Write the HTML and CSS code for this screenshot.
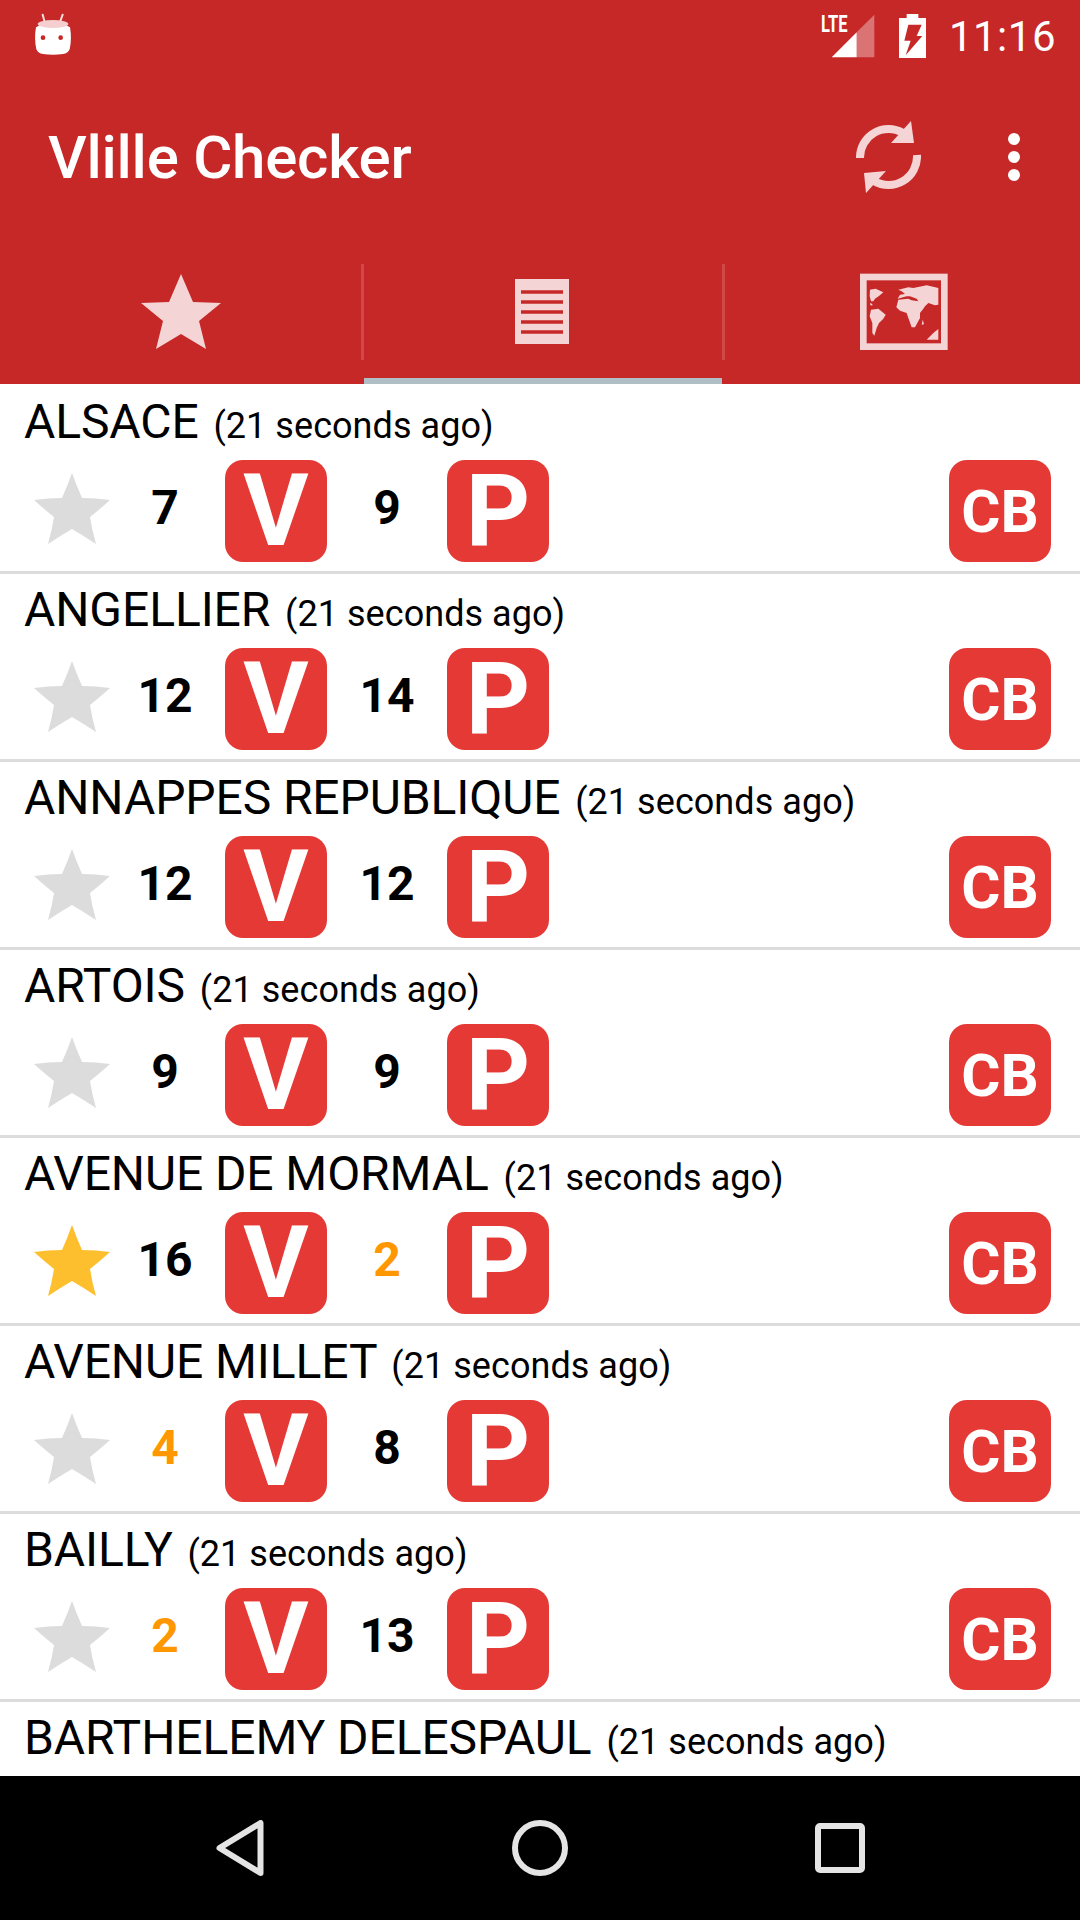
FILE: index.html
```html
<!DOCTYPE html>
<html lang="en">
<head>
    <meta charset="UTF-8">
    <meta name="viewport" content="width=device-width, initial-scale=1.0">
    <title>Vlille Checker</title>
    <link rel="stylesheet" href="styles.css">
</head>
<body>
    <svg class="defs" width="0" height="0">
        <symbol id="star" viewBox="0 0 76 71">
            <path d="M38 0 Q43 14 48 25 Q62 25 76 27 Q66 36 56 44 Q58 57 62 71 Q50 63 38 56 Q26 63 14 71 Q18 57 20 44 Q10 36 0 27 Q14 25 28 25 Q33 14 38 0 Z"/>
        </symbol>
    </svg>

    <header class="header">
        <div class="status-bar">
            <svg class="robot" viewBox="0 0 150 150" width="50" height="50">
                <path d="M44 14 L50 36 M104 14 L96 36" stroke="#f7dede" stroke-width="6" stroke-linecap="round"/>
                <path d="M24 52 Q75 20 126 52 Q132 85 125 118 Q120 130 105 132 Q75 136 45 132 Q30 130 25 118 Q18 85 24 52 Z" fill="#fff"/>
                <ellipse cx="75" cy="42" rx="46" ry="12" fill="#f5cfcf"/>
                <circle cx="45" cy="83" r="7" fill="#c62828"/>
                <circle cx="98" cy="83" r="7" fill="#c62828"/>
            </svg>
            <div class="status-right">
                <svg viewBox="0 0 360 168" width="120" height="56">
                    <text x="18" y="72" class="lte" textLength="80" lengthAdjust="spacingAndGlyphs">LTE</text>
                    <polygon points="50,148 125,73 125,148" fill="#fff"/>
                    <polygon points="125,73 178,20 178,148 125,148" fill="#fff" opacity=".35"/>
                    <path d="M252 30 H275 V18 H310 V30 H333 V150 H252 Z" fill="#fff"/>
                    <polygon points="280,50 320,50 305,84 322,84 272,142 287,98 268,98" fill="#c62828"/>
                </svg>
                <span class="clock">11:16</span>
            </div>
        </div>

        <div class="app-bar">
            <h1 class="title">Vlille Checker</h1>
            <svg class="sync" viewBox="0 0 65 72" width="65" height="72">
                <path d="M4 37 A28.5 28.5 0 0 1 47 12 M61 34 A28.5 28.5 0 0 1 18 60" fill="none" stroke="#f4d4d4" stroke-width="8"/>
                <polygon points="55,0 58,22 35,22" fill="#f4d4d4"/>
                <polygon points="10,72 8,52 30,50" fill="#f4d4d4"/>
            </svg>
            <div class="more"><i></i><i></i><i></i></div>
        </div>

        <nav class="tabs">
            <div class="tab tab-first">
                <svg viewBox="0 0 80 76" width="80" height="76">
                    <polygon points="40,0 52,28 80,29 58,47 65,75 40,60 15,75 22,47 0,29 28,28" fill="#f4d4d4"/>
                </svg>
            </div>
            <span class="tab-sep"></span>
            <div class="tab tab-active">
                <svg viewBox="0 0 54 65" width="54" height="65">
                    <rect width="54" height="65" fill="#f4d4d4"/>
                    <path d="M6 13 H48 M6 23 H48 M6 33 H48 M6 43 H48 M6 53 H48" stroke="#c62828" stroke-width="3.5"/>
                </svg>
            </div>
            <span class="tab-sep"></span>
            <div class="tab tab-last">
                <svg viewBox="0 0 294 264" width="98" height="88">
                    <rect x="25" y="27" width="243" height="209" fill="none" stroke="#f4d4d4" stroke-width="20"/>
                    <g fill="#f4d4d4">
                        <path d="M45 65 L62 62 L85 73 L72 84 L60 92 L55 100 L48 100 L44 85 Z"/>
                        <path d="M45 105 L52 108 L52 113 L46 111 Z"/>
                        <path d="M48 125 L70 122 L92 140 L85 152 L72 165 L65 180 L58 203 L52 195 L52 165 L44 145 Z"/>
                        <path d="M130 65 L160 58 L175 60 L215 52 L250 60 L250 110 L240 112 L220 105 L210 115 L205 122 L195 135 L195 150 L180 178 L170 178 L160 150 L155 135 L135 128 L124 118 L130 95 L160 92 L170 97 L190 100 L185 92 L165 85 L155 85 L128 92 L135 80 L150 78 L140 70 Z"/>
                        <path d="M203 155 L207 168 L200 171 Z"/>
                        <path d="M215 215 L235 195 L250 183 L250 215 Z"/>
                    </g>
                </svg>
            </div>
        </nav>
    </header>

    <main class="list">
        <article class="station">
            <div class="station-name">ALSACE <small>(21 seconds ago)</small></div>
            <div class="station-info">
                <svg class="star"><use href="#star"/></svg>
                <span class="count">7</span><span class="badge">V</span>
                <span class="count">9</span><span class="badge">P</span>
                <span class="badge badge-cb">CB</span>
            </div>
        </article>
        <article class="station">
            <div class="station-name">ANGELLIER <small>(21 seconds ago)</small></div>
            <div class="station-info">
                <svg class="star"><use href="#star"/></svg>
                <span class="count">12</span><span class="badge">V</span>
                <span class="count">14</span><span class="badge">P</span>
                <span class="badge badge-cb">CB</span>
            </div>
        </article>
        <article class="station">
            <div class="station-name">ANNAPPES REPUBLIQUE <small>(21 seconds ago)</small></div>
            <div class="station-info">
                <svg class="star"><use href="#star"/></svg>
                <span class="count">12</span><span class="badge">V</span>
                <span class="count">12</span><span class="badge">P</span>
                <span class="badge badge-cb">CB</span>
            </div>
        </article>
        <article class="station">
            <div class="station-name">ARTOIS <small>(21 seconds ago)</small></div>
            <div class="station-info">
                <svg class="star"><use href="#star"/></svg>
                <span class="count">9</span><span class="badge">V</span>
                <span class="count">9</span><span class="badge">P</span>
                <span class="badge badge-cb">CB</span>
            </div>
        </article>
        <article class="station">
            <div class="station-name">AVENUE DE MORMAL <small>(21 seconds ago)</small></div>
            <div class="station-info">
                <svg class="star star-on"><use href="#star"/></svg>
                <span class="count">16</span><span class="badge">V</span>
                <span class="count low">2</span><span class="badge">P</span>
                <span class="badge badge-cb">CB</span>
            </div>
        </article>
        <article class="station">
            <div class="station-name">AVENUE MILLET <small>(21 seconds ago)</small></div>
            <div class="station-info">
                <svg class="star"><use href="#star"/></svg>
                <span class="count low">4</span><span class="badge">V</span>
                <span class="count">8</span><span class="badge">P</span>
                <span class="badge badge-cb">CB</span>
            </div>
        </article>
        <article class="station">
            <div class="station-name">BAILLY <small>(21 seconds ago)</small></div>
            <div class="station-info">
                <svg class="star"><use href="#star"/></svg>
                <span class="count low">2</span><span class="badge">V</span>
                <span class="count">13</span><span class="badge">P</span>
                <span class="badge badge-cb">CB</span>
            </div>
        </article>
        <article class="station">
            <div class="station-name">BARTHELEMY DELESPAUL <small>(21 seconds ago)</small></div>
        </article>
    </main>

    <footer class="nav-bar">
        <svg viewBox="0 0 47 56" width="48" height="56">
            <path d="M44 3 V53 L3 28 Z" fill="none" stroke="#e4e4e4" stroke-width="6" stroke-linejoin="round"/>
        </svg>
        <svg viewBox="0 0 56 56" width="56" height="56">
            <circle cx="28" cy="28" r="25" fill="none" stroke="#e4e4e4" stroke-width="6"/>
        </svg>
        <svg viewBox="0 0 50 50" width="50" height="50">
            <rect x="3" y="3" width="44" height="44" rx="2" fill="none" stroke="#e4e4e4" stroke-width="6"/>
        </svg>
    </footer>
</body>
</html>
```

FILE: styles.css
```css
* {
    box-sizing: border-box;
}
body {
    margin: 0;
    height: 1920px;
    display: flex;
    flex-direction: column;
    font-family: Roboto, "Liberation Sans", sans-serif;
    background: #ffffff;
    color: #000000;
}
.defs {
    display: block;
    height: 0;
}
.header {
    background: #c62828;
    color: white;
}
.status-bar {
    height: 75px;
    display: flex;
    justify-content: space-between;
    align-items: flex-start;
    padding: 8px 24px 0 28px;
}
.robot {
    margin-top: 2px;
}
.status-right {
    display: flex;
    align-items: flex-start;
}
.lte {
    font-family: Roboto, sans-serif;
    font-size: 73px;
    font-weight: 700;
    fill: white;
}
.clock {
    font-size: 42px;
    line-height: 44px;
    letter-spacing: .5px;
    margin: 7px 0 0 14px;
}
.app-bar {
    height: 165px;
    display: flex;
    align-items: center;
    padding-left: 48px;
    padding-bottom: 1px;
}
.title {
    margin: 0;
    font-size: 60px;
    font-weight: 500;
    letter-spacing: -.25px;
    flex: 1;
}
.sync {
    margin-right: 87px;
}
.more {
    display: flex;
    flex-direction: column;
    gap: 6px;
    margin-right: 60px;
}
.more i {
    width: 12px;
    height: 12px;
    border-radius: 50%;
    background: white;
}
.tabs {
    height: 144px;
    display: flex;
}
.tab {
    display: flex;
    justify-content: center;
    padding-top: 34px;
}
.tab-first {
    width: 361px;
}
.tab-active {
    width: 358px;
    border-bottom: 6px solid #b0bec5;
    padding-top: 39px;
    padding-right: 2px;
}
.tab-last {
    width: 355px;
    padding-top: 28px;
    padding-left: 3px;
}
.tab-sep {
    width: 3px;
    height: 96px;
    margin-top: 24px;
    background: #d04848;
}
.list {
    flex: 1;
    overflow: hidden;
    padding-top: 2px;
}
.station {
    height: 188px;
    border-bottom: 3px solid #dcdcdc;
}
.station-name {
    height: 74px;
    padding: 8px 0 0 24px;
    font-size: 48px;
    line-height: 56px;
    letter-spacing: -.1px;
    white-space: nowrap;
}
.station-name small {
    font-size: 36px;
    margin-left: 3px;
    letter-spacing: .05px;
}
.station-info {
    display: grid;
    grid-template-columns: 105px 120px 102px 120px 102px 1fr 102px;
    align-items: center;
    padding-right: 29px;
}
.star {
    width: 76px;
    height: 71px;
    margin-left: 34px;
    margin-top: -6px;
    fill: #dcdcdc;
}
.star-on {
    fill: #fdbf2d;
}
.count {
    text-align: center;
    font-size: 48px;
    font-weight: 700;
    margin-top: -8px;
}
.low {
    color: #ff9800;
}
.badge {
    height: 102px;
    border-radius: 18px;
    background: #e53935;
    color: white;
    font-size: 100px;
    font-weight: 700;
    line-height: 102px;
    text-align: center;
}
.badge-cb {
    grid-column: 7;
    font-size: 60px;
    line-height: 104px;
}
.nav-bar {
    height: 144px;
    background: black;
    display: flex;
    align-items: center;
    padding-left: 216px;
    gap: 247.5px;
}
```
